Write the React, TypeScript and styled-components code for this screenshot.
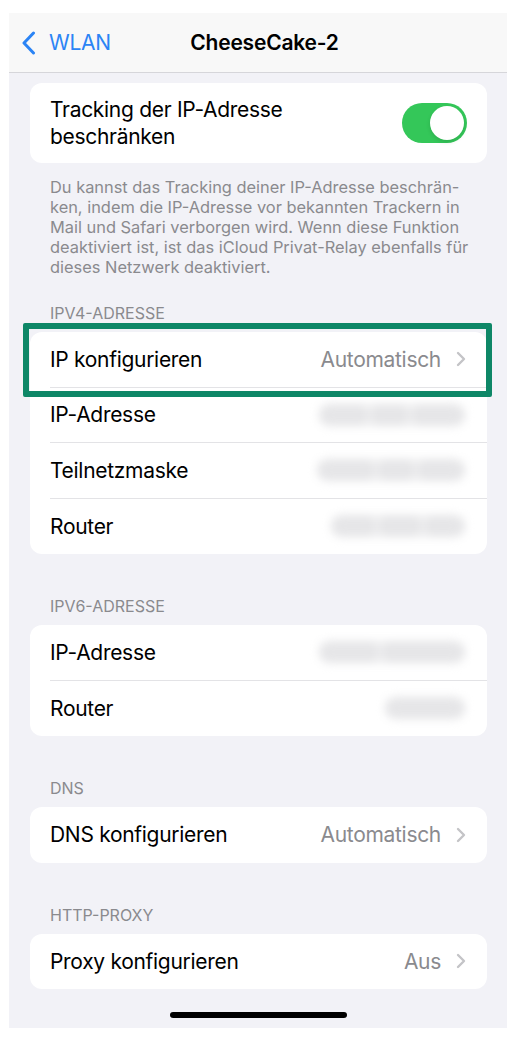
import React from "react";
import styled, { createGlobalStyle } from "styled-components";

const Global = createGlobalStyle`
  html, body { margin: 0; padding: 0; background: #ffffff; }
  body { font-family: Inter, "Noto Sans", "Liberation Sans", sans-serif; -webkit-font-smoothing: antialiased; }
  * { box-sizing: border-box; }
`;

const Screen = styled.div`
  margin: 13px 0 0 9px;
  width: 498px;
  height: 1015px;
  background: #f2f2f7;
  display: flex;
  flex-direction: column;
  overflow: hidden;
`;

const NavBar = styled.div`
  height: 60px;
  flex-shrink: 0;
  background: #f8f8f8;
  border-bottom: 1px solid #d6d6da;
  display: grid;
  grid-template-columns: 1fr auto 1fr;
  align-items: center;
  padding: 0 0 0 13px;
`;

const Back = styled.div`
  display: flex;
  align-items: center;
  gap: 13px;
  color: #2b84f5;
  font-size: 21px;
  letter-spacing: -0.3px;
`;

const Title = styled.div`
  font-size: 21px;
  font-weight: 600;
  color: #000;
  letter-spacing: -0.2px;
`;

const Content = styled.div`
  flex: 1;
  display: flex;
  flex-direction: column;
  padding: 10px 20px 0 21px;
`;

const Card = styled.div`
  background: #ffffff;
  border-radius: 12px;
  position: relative;
`;

const ToggleCard = styled(Card)`
  display: flex;
  align-items: center;
  justify-content: space-between;
  padding: 13px 20px;
`;

const Label = styled.div`
  font-size: 21px;
  line-height: 27px;
  color: #000;
  letter-spacing: -0.3px;
  white-space: nowrap;
`;

const Toggle = styled.div`
  width: 65px;
  height: 40px;
  border-radius: 20px;
  background: #34c759;
  display: flex;
  align-items: center;
  justify-content: flex-end;
  padding: 3px;
`;

const Knob = styled.div`
  width: 34px;
  height: 34px;
  border-radius: 50%;
  background: #fff;
  box-shadow: 0 2px 4px rgba(0, 0, 0, 0.12);
`;

const Footer = styled.div`
  padding: 14px 20px 0 20px;
  font-size: 16.4px;
  line-height: 20px;
  color: #8a8a8e;
`;

const FooterLine = styled.div`
  white-space: nowrap;
`;

const SectionHeader = styled.div<{ $top: number }>`
  margin-top: ${(p) => p.$top}px;
  margin-bottom: 9px;
  padding: 0 20px;
  font-size: 16px;
  line-height: 20px;
  color: #8a8a8e;
  text-transform: uppercase;
`;

const Row = styled.div`
  height: 55.5px;
  padding-left: 20px;
  display: flex;
`;

const RowBody = styled.div<{ $last?: boolean }>`
  flex: 1;
  display: flex;
  align-items: center;
  justify-content: space-between;
  padding-right: 21px;
  border-bottom: ${(p) => (p.$last ? "none" : "1px solid #e3e3e6")};
`;

const Value = styled.div`
  display: flex;
  align-items: center;
  gap: 15px;
  font-size: 21px;
  color: #8a8a8e;
  letter-spacing: -0.3px;
`;

const Redacted = styled.div<{ $w: number }>`
  width: ${(p) => p.$w}px;
  height: 24px;
  display: flex;
  gap: 2px;
  padding: 2px;
  border-radius: 12px;
  background: #f1f1f2;
  filter: blur(4px);
`;

const Blob = styled.div<{ $grow: number }>`
  flex: ${(p) => p.$grow};
  border-radius: 10px;
  background: #e6e6e8;
`;

const Highlight = styled.div`
  position: absolute;
  top: -9px;
  left: -7px;
  right: -5px;
  height: 74px;
  border: 6px solid #0e8767;
  border-radius: 2px;
  pointer-events: none;
`;

const HomeWrap = styled.div`
  display: flex;
  justify-content: center;
  padding: 0 0 10px 0;
`;

const HomeBar = styled.div`
  width: 177px;
  height: 6px;
  border-radius: 3px;
  background: #000;
`;

const Chevron = () => (
  <svg width="10" height="16" viewBox="0 0 10 16">
    <path d="M2 2 L8 8 L2 14" fill="none" stroke="#c4c4c7" strokeWidth="2.4" strokeLinecap="round" strokeLinejoin="round" />
  </svg>
);

const BackChevron = () => (
  <svg width="14" height="24" viewBox="0 0 14 24">
    <path d="M11.5 2 L2 12 L11.5 22" fill="none" stroke="#2b84f5" strokeWidth="3" strokeLinecap="round" strokeLinejoin="round" />
  </svg>
);

type RowData = { label: string; value?: string; redact?: number[]; w?: number };

const RowItem = ({ d, last }: { d: RowData; last?: boolean }) => (
  <Row>
    <RowBody $last={last}>
      <Label>{d.label}</Label>
      {d.value ? (
        <Value>
          {d.value}
          <Chevron />
        </Value>
      ) : (
        <Redacted $w={d.w || 148}>
          {(d.redact || [1, 1, 1]).map((g, i) => (
            <Blob key={i} $grow={g} />
          ))}
        </Redacted>
      )}
    </RowBody>
  </Row>
);

export default function App() {
  const ipv4: RowData[] = [
    { label: "IP konfigurieren", value: "Automatisch" },
    { label: "IP-Adresse", w: 148, redact: [1, 0.8, 1.1] },
    { label: "Teilnetzmaske", w: 150, redact: [1.2, 0.8, 1] },
    { label: "Router", w: 136, redact: [1, 1, 0.9] },
  ];
  const ipv6: RowData[] = [
    { label: "IP-Adresse", w: 148, redact: [1, 1.4] },
    { label: "Router", w: 82, redact: [1] },
  ];
  return (
    <>
      <Global />
      <Screen>
        <NavBar>
          <Back>
            <BackChevron />
            WLAN
          </Back>
          <Title>CheeseCake-2</Title>
          <div />
        </NavBar>
        <Content>
          <ToggleCard>
            <Label>
              Tracking der IP-Adresse
              <br />
              beschränken
            </Label>
            <Toggle>
              <Knob />
            </Toggle>
          </ToggleCard>
          <Footer>
            <FooterLine>Du kannst das Tracking deiner IP-Adresse beschrän-</FooterLine>
            <FooterLine>ken, indem die IP-Adresse vor bekannten Trackern in</FooterLine>
            <FooterLine>Mail und Safari verborgen wird. Wenn diese Funktion</FooterLine>
            <FooterLine>deaktiviert ist, ist das iCloud Privat-Relay ebenfalls für</FooterLine>
            <FooterLine>dieses Netzwerk deaktiviert.</FooterLine>
          </Footer>

          <SectionHeader $top={26}>IPv4-Adresse</SectionHeader>
          <Card>
            {ipv4.map((d, i) => (
              <RowItem key={i} d={d} last={i === ipv4.length - 1} />
            ))}
            <Highlight />
          </Card>

          <SectionHeader $top={42}>IPv6-Adresse</SectionHeader>
          <Card>
            {ipv6.map((d, i) => (
              <RowItem key={i} d={d} last={i === ipv6.length - 1} />
            ))}
          </Card>

          <SectionHeader $top={42}>DNS</SectionHeader>
          <Card>
            <RowItem d={{ label: "DNS konfigurieren", value: "Automatisch" }} last />
          </Card>

          <SectionHeader $top={42}>HTTP-Proxy</SectionHeader>
          <Card>
            <RowItem d={{ label: "Proxy konfigurieren", value: "Aus" }} last />
          </Card>
        </Content>
        <HomeWrap>
          <HomeBar />
        </HomeWrap>
      </Screen>
    </>
  );
}
